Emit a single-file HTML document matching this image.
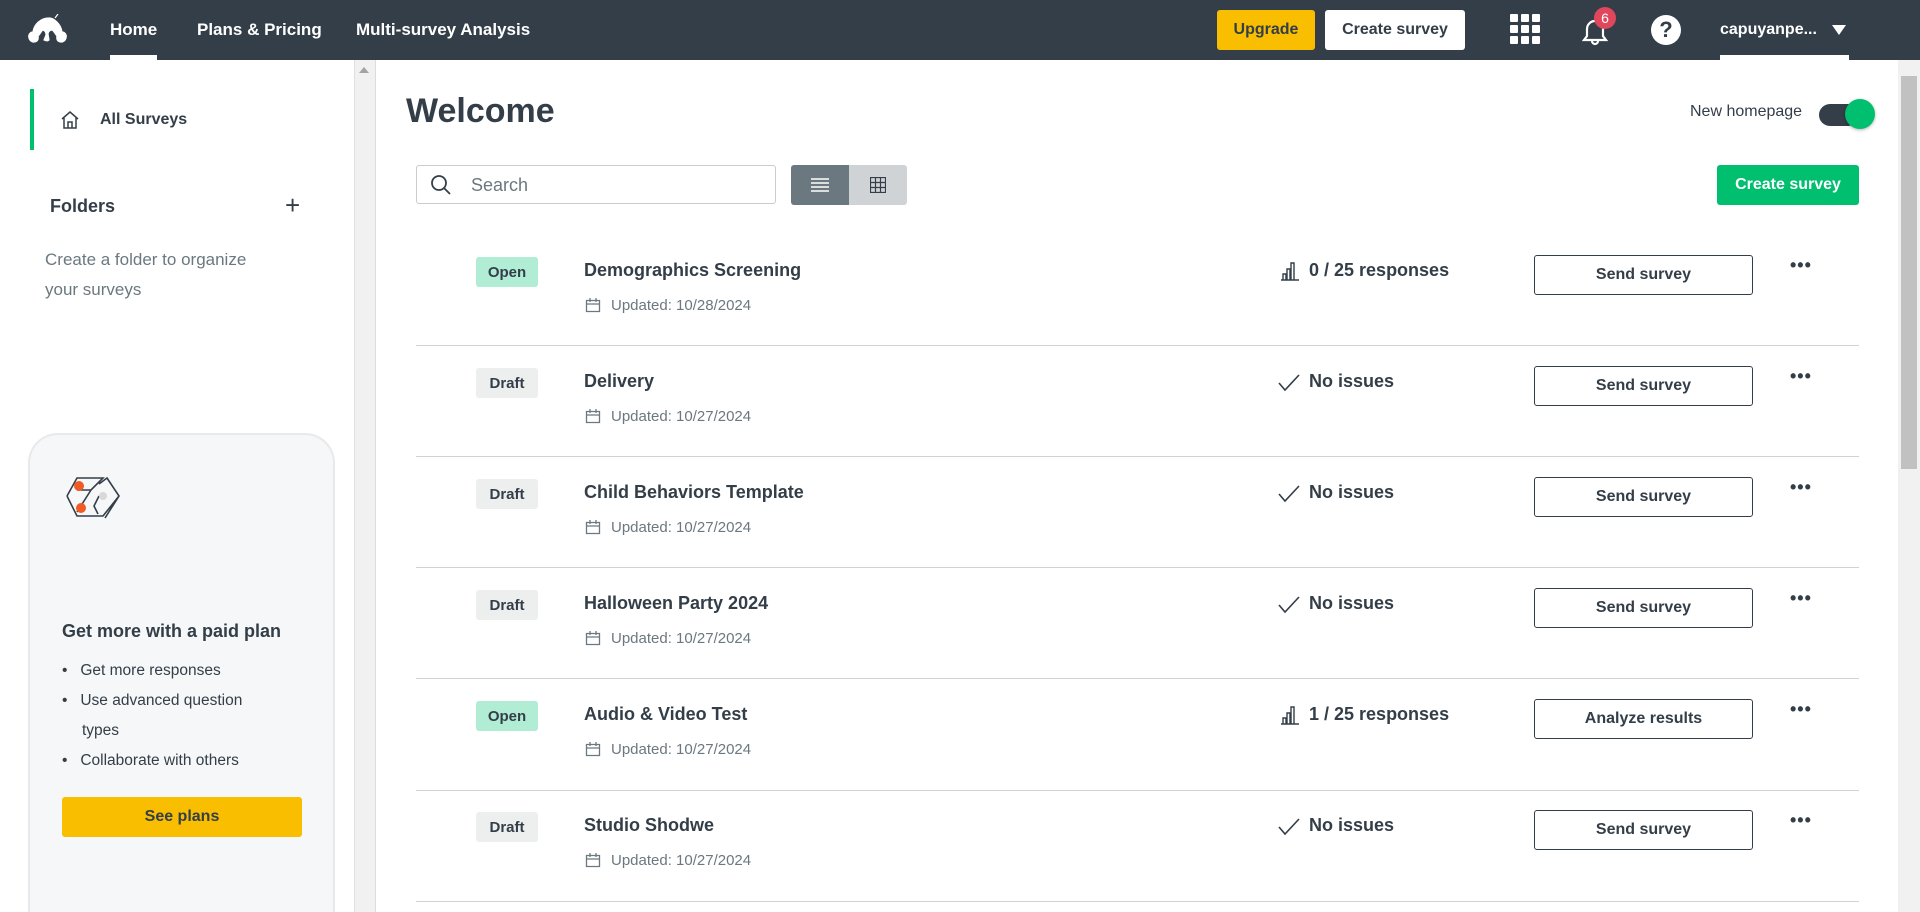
<!DOCTYPE html>
<html style="width:1920px;height:912px;overflow:hidden"><head><meta charset="utf-8"><style>
*{box-sizing:border-box;margin:0;padding:0}
body{width:1920px;height:912px;overflow:hidden;background:#fff;font-family:"Liberation Sans",sans-serif;color:#333e48;position:relative}
.a{position:absolute}
.nav{left:0;top:0;width:1920px;height:60px;background:#333e48}
.nl{color:#fff;font-weight:bold;font-size:17px;top:20px}
.btn{display:flex;align-items:center;justify-content:center;border-radius:3px;font-size:16px;font-weight:bold}
.badge{left:60px;top:-12px;height:30px;width:62px;border-radius:3px;font-size:15px;font-weight:bold;display:flex;align-items:center;justify-content:center}
.open{background:#b1ecd4}.draft{background:#edeeee}
.title{left:168px;top:-9px;font-size:18px;font-weight:bold;color:#333e48}
.upd{left:195px;top:28px;font-size:15px;color:#6b787f}
.cal{left:169px;top:28px}
.stat{left:893px;top:-9px;font-size:18px;font-weight:bold}
.send{left:1118px;top:-14px;width:219px;height:40px;border:1px solid #333e48;border-radius:3px;font-size:16px;font-weight:bold;display:flex;align-items:center;justify-content:center}
.dots{left:1374px;top:-14px;font-size:18px;font-weight:bold;letter-spacing:1px}
</style></head><body>
<div class="a nav"></div>
<svg class="a" style="left:28px;top:14px" width="42" height="32" viewBox="0 0 42 32"><path d="M21 4c-8 0-15 6-16 14-3 0-5 3-4 6 1 4 5 5 8 3 2-2 1-5 1-5 2-1 3-5 5-6 2 1 3 2 3 5l-2 5c2 1 4 1 5 0l-1-6c0-2 2-4 4-4 2 1 3 4 5 6 0 0-1 3 1 5 3 2 7 1 8-3 1-3-1-6-4-6-1-8-8-14-13-14z M27 4l3-4" fill="#fff" stroke="#fff" stroke-width="1.2"/></svg>
<div class="a nl" style="left:110px">Home</div>
<div class="a" style="left:110px;top:55px;width:47px;height:5px;background:#fff"></div>
<div class="a nl" style="left:197px">Plans &amp; Pricing</div>
<div class="a nl" style="left:356px">Multi-survey Analysis</div>
<div class="a btn" style="left:1217px;top:10px;width:98px;height:40px;background:#f9be00;color:#333e48">Upgrade</div>
<div class="a btn" style="left:1325px;top:10px;width:140px;height:40px;background:#fff;color:#333e48">Create survey</div>
<svg class="a" style="left:1510px;top:14px" width="32" height="32"><g fill="#fff"><rect x="0" y="0" width="8" height="8" rx="1"/><rect x="11" y="0" width="8" height="8" rx="1"/><rect x="22" y="0" width="8" height="8" rx="1"/><rect x="0" y="11" width="8" height="8" rx="1"/><rect x="11" y="11" width="8" height="8" rx="1"/><rect x="22" y="11" width="8" height="8" rx="1"/><rect x="0" y="22" width="8" height="8" rx="1"/><rect x="11" y="22" width="8" height="8" rx="1"/><rect x="22" y="22" width="8" height="8" rx="1"/></g></svg>
<svg class="a" style="left:1580px;top:16px" width="30" height="30"><path d="M4 24h22l-3-4v-7a8 8 0 0 0-16 0v7z M12 25a3 3 0 0 0 6 0" fill="none" stroke="#fff" stroke-width="2.2"/></svg>
<div class="a" style="left:1594px;top:7px;width:22px;height:22px;border-radius:50%;background:#e0475d;color:#fff;font-size:14px;display:flex;align-items:center;justify-content:center">6</div>
<div class="a" style="left:1651px;top:15px;width:30px;height:30px;border-radius:50%;background:#fff;color:#333e48;font-weight:bold;font-size:22px;display:flex;align-items:center;justify-content:center">?</div>
<div class="a nl" style="left:1720px;top:21px;font-size:16px">capuyanpe...</div>
<div class="a" style="left:1832px;top:25px;width:0;height:0;border-left:7px solid transparent;border-right:7px solid transparent;border-top:10px solid #fff"></div>
<div class="a" style="left:1720px;top:55px;width:129px;height:5px;background:#fff"></div>
<!-- sidebar -->
<div class="a" style="left:30px;top:89px;width:4px;height:61px;background:#00bf6f"></div>
<svg class="a" style="left:60px;top:110px" width="20" height="20"><path d="M2 9L10 2l8 7M4 8v10h12V8M8 18v-6h4v6" fill="none" stroke="#333e48" stroke-width="1.5"/></svg>
<div class="a" style="left:100px;top:111px;font-size:16px;font-weight:bold">All Surveys</div>
<div class="a" style="left:50px;top:196px;font-size:18px;font-weight:bold">Folders</div>
<div class="a" style="left:285px;top:190px;font-size:26px;font-weight:300">+</div>
<div class="a" style="left:45px;top:245px;font-size:17px;color:#6b787f;line-height:30px">Create a folder to organize<br>your surveys</div>
<div class="a" style="left:28px;top:433px;width:307px;height:479px;border-radius:30px 30px 0 0;background:#f6f7f8;border:2px solid #e8e9ea;border-bottom:none"></div>
<svg class="a" style="left:64px;top:472px" width="56" height="50" viewBox="0 0 56 50"><path d="M3 24L13 6h26l-12 12H13 M3 24l10 20h26l16-20-12-18-8 6 M27 18l-14 22 M43 6l12 18-14 22 M35 24l-5 10 4 8" fill="none" stroke="#333e48" stroke-width="1.6"/><circle cx="15" cy="14" r="5" fill="#f05b24"/><circle cx="17" cy="36" r="5" fill="#f05b24"/><circle cx="39" cy="24" r="4" fill="#d8d8d8"/></svg>
<div class="a" style="left:62px;top:621px;font-size:18px;font-weight:bold">Get more with a paid plan</div>
<div class="a" style="left:62px;top:656px;font-size:15.5px;line-height:30px;color:#333e48">
<div>•&nbsp;&nbsp;&nbsp;Get more responses</div><div>•&nbsp;&nbsp;&nbsp;Use advanced question</div><div style="padding-left:20px">types</div><div>•&nbsp;&nbsp;&nbsp;Collaborate with others</div></div>
<div class="a btn" style="left:62px;top:797px;width:240px;height:40px;background:#f9be00;color:#333e48">See plans</div>
<div class="a" style="left:354px;top:60px;width:22px;height:852px;background:#f1f1f1;border-left:1px solid #e0e0e0;border-right:1px solid #dcdcdc"></div>
<div class="a" style="left:359px;top:67px;border-left:5px solid transparent;border-right:5px solid transparent;border-bottom:6px solid #a3a3a3"></div>
<div class="a" style="left:1898px;top:60px;width:22px;height:852px;background:#f1f1f1"></div>
<div class="a" style="left:1901px;top:76px;width:16px;height:393px;background:#c1c1c1"></div>
<!-- main -->
<div class="a" style="left:406px;top:92px;font-size:34px;font-weight:bold;color:#333e48">Welcome</div>
<div class="a" style="left:1690px;top:103px;font-size:16px">New homepage</div>
<div class="a" style="left:1819px;top:104px;width:40px;height:22px;border-radius:11px;background:#333e48"></div>
<div class="a" style="left:1845px;top:99px;width:30px;height:30px;border-radius:50%;background:#00bf6f;box-shadow:0 1px 3px rgba(0,0,0,.3)"></div>
<div class="a" style="left:416px;top:165px;width:360px;height:39px;border:1px solid #ccc;border-radius:3px"></div>
<svg class="a" style="left:430px;top:174px" width="22" height="22"><circle cx="9" cy="9" r="7" fill="none" stroke="#333e48" stroke-width="1.8"/><path d="M14 14l6 6" stroke="#333e48" stroke-width="1.8"/></svg>
<div class="a" style="left:471px;top:175px;font-size:18px;color:#6b787f">Search</div>
<div class="a" style="left:791px;top:165px;width:58px;height:40px;background:#6b787f;border-radius:3px 0 0 3px"></div>
<div class="a" style="left:849px;top:165px;width:58px;height:40px;background:#d0d3d6;border-radius:0 3px 3px 0"></div>
<svg class="a" style="left:811px;top:177px" width="18" height="16"><path d="M0 2h18M0 6h18M0 10h18M0 14h18" stroke="#fff" stroke-width="1.6"/></svg>
<svg class="a" style="left:870px;top:177px" width="16" height="16"><path d="M.5.5h15v15H.5zM5.5 0v16M10.5 0v16M0 5.5h16M0 10.5h16" fill="none" stroke="#333e48" stroke-width="1.2"/></svg>
<div class="a btn" style="left:1717px;top:165px;width:142px;height:40px;background:#00bf6f;color:#fff">Create survey</div>

<div class="a" style="left:416px;top:269px;width:1443px">
 <div class="a badge open">Open</div><div class="a title">Demographics Screening</div>
 <svg class="a cal" width="16" height="16"><path d="M1.5 3.5h13v11h-13zM1.5 7h13M5 1v4M11 1v4" fill="none" stroke="#6b787f" stroke-width="1.3"/></svg><div class="a upd">Updated: 10/28/2024</div>
 <svg class="a" style="left:864px;top:-8px" width="20" height="20"><path d="M1 19h18M3 19v-6h3v6M7 19V8h3v11M11 19V2h3v17" fill="none" stroke="#333e48" stroke-width="1.4"/></svg>
 <div class="a stat">0 / 25 responses</div><div class="a send">Send survey</div><div class="a dots">•••</div>
</div>
<div class="a" style="left:416px;top:345px;width:1443px;height:1px;background:#d0d3d6"></div>

<div class="a" style="left:416px;top:380px;width:1443px">
 <div class="a badge draft">Draft</div><div class="a title">Delivery</div>
 <svg class="a cal" width="16" height="16"><path d="M1.5 3.5h13v11h-13zM1.5 7h13M5 1v4M11 1v4" fill="none" stroke="#6b787f" stroke-width="1.3"/></svg><div class="a upd">Updated: 10/27/2024</div>
 <svg class="a" style="left:862px;top:-6px" width="22" height="18"><path d="M1 9l6 7L21 1" fill="none" stroke="#333e48" stroke-width="1.6"/></svg>
 <div class="a stat">No issues</div><div class="a send">Send survey</div><div class="a dots">•••</div>
</div>
<div class="a" style="left:416px;top:456px;width:1443px;height:1px;background:#d0d3d6"></div>

<div class="a" style="left:416px;top:491px;width:1443px">
 <div class="a badge draft">Draft</div><div class="a title">Child Behaviors Template</div>
 <svg class="a cal" width="16" height="16"><path d="M1.5 3.5h13v11h-13zM1.5 7h13M5 1v4M11 1v4" fill="none" stroke="#6b787f" stroke-width="1.3"/></svg><div class="a upd">Updated: 10/27/2024</div>
 <svg class="a" style="left:862px;top:-6px" width="22" height="18"><path d="M1 9l6 7L21 1" fill="none" stroke="#333e48" stroke-width="1.6"/></svg>
 <div class="a stat">No issues</div><div class="a send">Send survey</div><div class="a dots">•••</div>
</div>
<div class="a" style="left:416px;top:567px;width:1443px;height:1px;background:#d0d3d6"></div>

<div class="a" style="left:416px;top:602px;width:1443px">
 <div class="a badge draft">Draft</div><div class="a title">Halloween Party 2024</div>
 <svg class="a cal" width="16" height="16"><path d="M1.5 3.5h13v11h-13zM1.5 7h13M5 1v4M11 1v4" fill="none" stroke="#6b787f" stroke-width="1.3"/></svg><div class="a upd">Updated: 10/27/2024</div>
 <svg class="a" style="left:862px;top:-6px" width="22" height="18"><path d="M1 9l6 7L21 1" fill="none" stroke="#333e48" stroke-width="1.6"/></svg>
 <div class="a stat">No issues</div><div class="a send">Send survey</div><div class="a dots">•••</div>
</div>
<div class="a" style="left:416px;top:678px;width:1443px;height:1px;background:#d0d3d6"></div>

<div class="a" style="left:416px;top:713px;width:1443px">
 <div class="a badge open">Open</div><div class="a title">Audio &amp; Video Test</div>
 <svg class="a cal" width="16" height="16"><path d="M1.5 3.5h13v11h-13zM1.5 7h13M5 1v4M11 1v4" fill="none" stroke="#6b787f" stroke-width="1.3"/></svg><div class="a upd">Updated: 10/27/2024</div>
 <svg class="a" style="left:864px;top:-8px" width="20" height="20"><path d="M1 19h18M3 19v-6h3v6M7 19V8h3v11M11 19V2h3v17" fill="none" stroke="#333e48" stroke-width="1.4"/></svg>
 <div class="a stat">1 / 25 responses</div><div class="a send">Analyze results</div><div class="a dots">•••</div>
</div>
<div class="a" style="left:416px;top:790px;width:1443px;height:1px;background:#d0d3d6"></div>

<div class="a" style="left:416px;top:824px;width:1443px">
 <div class="a badge draft">Draft</div><div class="a title">Studio Shodwe</div>
 <svg class="a cal" width="16" height="16"><path d="M1.5 3.5h13v11h-13zM1.5 7h13M5 1v4M11 1v4" fill="none" stroke="#6b787f" stroke-width="1.3"/></svg><div class="a upd">Updated: 10/27/2024</div>
 <svg class="a" style="left:862px;top:-6px" width="22" height="18"><path d="M1 9l6 7L21 1" fill="none" stroke="#333e48" stroke-width="1.6"/></svg>
 <div class="a stat">No issues</div><div class="a send">Send survey</div><div class="a dots">•••</div>
</div>
<div class="a" style="left:416px;top:901px;width:1443px;height:1px;background:#d0d3d6"></div>
</body></html>
